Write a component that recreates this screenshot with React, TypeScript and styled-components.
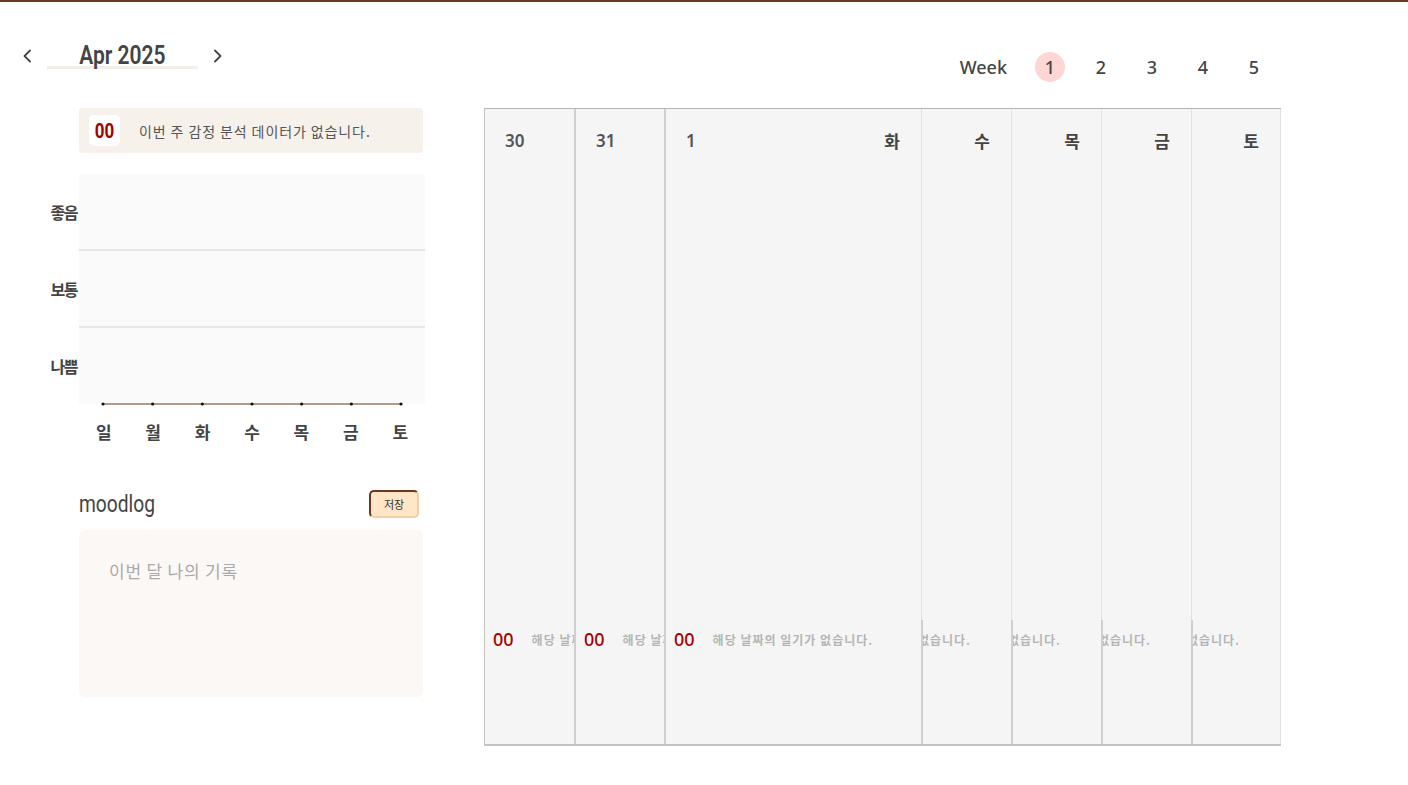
import React from 'react';
import styled, { createGlobalStyle } from 'styled-components';

const GlobalStyle = createGlobalStyle`
  html, body {
    margin: 0;
    padding: 0;
    background: #ffffff;
    font-family: "Noto Sans CJK KR", "Noto Sans", sans-serif;
    color: #444;
  }
  * { box-sizing: border-box; }
`;

const PageContainer = styled.div`
  min-height: 785px;
  border-top: 2px solid #6b3a1e;
  display: flex;
  align-items: flex-start;
  padding: 36px 0 0 20px;
`;

const LeftPanel = styled.div`
  width: 405px;
  display: flex;
  flex-direction: column;
`;

const MonthNav = styled.div`
  display: flex;
  align-items: center;
  height: 36px;
`;

const ArrowButton = styled.button`
  border: none;
  background: none;
  padding: 0;
  width: 14px;
  height: 20px;
  display: flex;
  align-items: center;
  justify-content: center;
  color: #444;
  cursor: pointer;
`;

const MonthTitle = styled.div`
  width: 151px;
  margin: 0 13px;
  height: 26px;
  border-bottom: 3px solid #f3eee9;
  display: flex;
  justify-content: center;
  overflow: visible;
`;

const Condensed = styled.span<{ $size: number; $weight: number }>`
  display: inline-block;
  font-family: Roboto, "Liberation Sans", sans-serif;
  font-weight: ${(p) => p.$weight};
  font-size: ${(p) => p.$size}px;
  line-height: 1;
  color: #444;
  transform: scaleX(0.84);
  white-space: nowrap;
`;

const Indented = styled.div`
  margin-left: 59px;
  width: 346px;
`;

const SummaryBox = styled.div`
  margin-top: 34px;
  width: 344px;
  height: 45px;
  background: #f6f1eb;
  border-radius: 4px;
  display: flex;
  align-items: center;
  padding: 0 10px;
  gap: 19px;
`;

const ScoreBadge = styled.div`
  width: 31px;
  height: 31px;
  background: #fff;
  border-radius: 5px;
  display: flex;
  align-items: center;
  justify-content: center;
  font-family: Roboto, sans-serif;
  font-weight: 700;
  font-size: 20px;
  color: #a30000;
  span { display: inline-block; transform: scaleX(0.85); }
`;

const SummaryText = styled.span`
  font-size: 14px;
  letter-spacing: 0.9px;
  color: #555;
`;

const ChartWrap = styled.div`
  margin-top: 21px;
  position: relative;
`;

const ChartArea = styled.div`
  width: 346px;
  background: #fafafa;
  display: flex;
  flex-direction: column;
  position: relative;
`;

const ChartRow = styled.div<{ $last?: boolean }>`
  height: ${(p) => (p.$last ? 76 : 77)}px;
  border-bottom: ${(p) => (p.$last ? 'none' : '2px solid #ebe6e6')};
  position: relative;
`;

const YLabel = styled.span`
  position: absolute;
  right: calc(100% + 2px);
  top: 50%;
  transform: translateY(-50%);
  white-space: nowrap;
  font-weight: 700;
  font-size: 16px;
  color: #444;
  letter-spacing: -1.5px;
`;

const Baseline = styled.svg`
  position: absolute;
  left: 0;
  bottom: -2px;
`;

const XLabels = styled.div`
  width: 346px;
  display: grid;
  grid-template-columns: repeat(7, 1fr);
  margin-top: 16px;
`;

const XLabel = styled.span`
  text-align: center;
  font-weight: 700;
  font-size: 17px;
  color: #444;
  line-height: 24px;
`;

const MoodHeader = styled.div`
  margin-top: 46px;
  width: 340px;
  display: flex;
  align-items: center;
  justify-content: space-between;
  height: 28px;
`;

const MoodTitle = styled.div`
  width: 90px;
  display: flex;
  span { transform-origin: left center; transform: scaleX(0.8); }
`;

const SaveButton = styled.button`
  width: 50px;
  height: 28px;
  background: #ffe6c7;
  border: 2px solid;
  border-color: #6b3a1e #f2cfa8 #f2cfa8 #6b3a1e;
  border-radius: 5px;
  font-family: "Noto Sans CJK KR", sans-serif;
  font-size: 11px;
  color: #333;
  padding: 0;
`;

const MoodTextarea = styled.textarea`
  margin-top: 12px;
  width: 344px;
  height: 167px;
  background: #fcf8f5;
  border: none;
  border-radius: 6px;
  resize: none;
  padding: 28px 30px;
  font-family: "Noto Sans CJK KR", sans-serif;
  font-size: 17px;
  letter-spacing: 0.8px;
  color: #444;
  outline: none;
  &::placeholder {
    color: #aaa;
  }
`;

const RightPanel = styled.div`
  margin-left: 59px;
  width: 797px;
  display: flex;
  flex-direction: column;
`;

const WeekNav = styled.div`
  height: 30px;
  margin-top: 14px;
  display: flex;
  align-items: center;
  justify-content: flex-end;
  padding-right: 12px;
  gap: 21px;
  font-family: "Noto Sans", "Lato", sans-serif;
  font-weight: 500;
  font-size: 18px;
  color: #444;
`;

const WeekLabel = styled.span`
  margin-right: 7px;
`;

const WeekTab = styled.span<{ $active?: boolean }>`
  width: 30px;
  height: 30px;
  border-radius: 50%;
  background: ${(p) => (p.$active ? '#ffd6d6' : 'transparent')};
  display: flex;
  align-items: center;
  justify-content: center;
`;

const Calendar = styled.div`
  margin-top: 26px;
  height: 638px;
  display: flex;
  border-top: 1px solid #b5b5b5;
  border-bottom: 2px solid #c4c4c4;
  border-left: 1px solid #c4c4c4;
  background: #f5f5f5;
`;

const DayColumn = styled.div<{ $w: number; $strong?: boolean; $last?: boolean }>`
  width: ${(p) => p.$w}px;
  display: flex;
  flex-direction: column;
  border-left: ${(p) => (p.$strong ? '2px solid #cfcfcf' : 'none')};
  border-right: ${(p) => (p.$last ? '1px solid #e2e2e2' : 'none')};
  position: relative;
  &:first-child { border-left: none; width: ${(p) => p.$w - 1}px; }
`;

const DayTop = styled.div<{ $soft?: boolean }>`
  flex: 1;
  display: flex;
  justify-content: space-between;
  padding: 19px 21px 0 20px;
  border-left: ${(p) => (p.$soft ? '1px solid #e2e2e2' : 'none')};
`;

const DateNum = styled.span`
  font-family: "Noto Sans", sans-serif;
  font-weight: 600;
  font-size: 17px;
  line-height: 26px;
  color: #555;
`;

const DayName = styled.span`
  font-weight: 700;
  font-size: 17px;
  line-height: 26px;
  color: #444;
`;

const DayBottom = styled.div<{ $end?: boolean; $soft?: boolean }>`
  height: 124px;
  overflow: hidden;
  display: flex;
  justify-content: ${(p) => (p.$end ? 'flex-end' : 'flex-start')};
  padding: 6px ${(p) => (p.$end ? 40 : 0)}px 0 ${(p) => (p.$end ? 0 : 8)}px;
  border-left: ${(p) => (p.$soft ? '2px solid #cfcfcf' : 'none')};
`;

const DiaryRow = styled.div`
  display: flex;
  align-items: center;
  gap: 18px;
  flex-shrink: 0;
  height: 26px;
  white-space: nowrap;
`;

const DiaryScore = styled.span`
  font-family: "Noto Sans", sans-serif;
  font-weight: 500;
  font-size: 18px;
  color: #a30000;
`;

const DiaryEmpty = styled.span`
  font-weight: 700;
  font-size: 12px;
  letter-spacing: 1px;
  color: #b5b5b5;
`;

const Chevron = ({ dir }: { dir: 'left' | 'right' }) => (
  <svg width="10" height="14" viewBox="0 0 10 14" fill="none">
    <path
      d={dir === 'left' ? 'M8 1.5 L2.5 7 L8 12.5' : 'M2 1.5 L7.5 7 L2 12.5'}
      stroke="#444"
      strokeWidth="1.8"
      strokeLinecap="round"
      strokeLinejoin="round"
    />
  </svg>
);

const weekdays = ['일', '월', '화', '수', '목', '금', '토'];

type Day = { w: number; date?: string; name?: string; end?: boolean; strong?: boolean };

const days: Day[] = [
  { w: 90, date: '30', strong: true },
  { w: 90, date: '31', strong: true },
  { w: 257, date: '1', name: '화', strong: true },
  { w: 90, name: '수', end: true },
  { w: 90, name: '목', end: true },
  { w: 90, name: '금', end: true },
  { w: 90, name: '토', end: true },
];

const App: React.FC = () => {
  const dotXs = weekdays.map((_, i) => 24 + i * 49.67);

  return (
    <>
      <GlobalStyle />
      <PageContainer>
        <LeftPanel>
          <MonthNav>
            <ArrowButton aria-label="prev">
              <Chevron dir="left" />
            </ArrowButton>
            <MonthTitle>
              <Condensed $size={25} $weight={600}>Apr 2025</Condensed>
            </MonthTitle>
            <ArrowButton aria-label="next">
              <Chevron dir="right" />
            </ArrowButton>
          </MonthNav>

          <Indented>
            <SummaryBox>
              <ScoreBadge>
                <span>00</span>
              </ScoreBadge>
              <SummaryText>이번 주 감정 분석 데이터가 없습니다.</SummaryText>
            </SummaryBox>

            <ChartWrap>
              <ChartArea>
                <ChartRow>
                  <YLabel>좋음</YLabel>
                </ChartRow>
                <ChartRow>
                  <YLabel>보통</YLabel>
                </ChartRow>
                <ChartRow $last>
                  <YLabel>나쁨</YLabel>
                </ChartRow>
                <Baseline width="346" height="4" viewBox="0 0 346 4">
                  <line x1={dotXs[0]} y1="2" x2={dotXs[6]} y2="2" stroke="#b09a8c" strokeWidth="2" />
                  {dotXs.map((x) => (
                    <circle key={x} cx={x} cy="2" r="1.6" fill="#111" />
                  ))}
                </Baseline>
              </ChartArea>
              <XLabels>
                {weekdays.map((d) => (
                  <XLabel key={d}>{d}</XLabel>
                ))}
              </XLabels>
            </ChartWrap>

            <MoodHeader>
              <MoodTitle>
                <Condensed $size={24} $weight={400}>moodlog</Condensed>
              </MoodTitle>
              <SaveButton>저장</SaveButton>
            </MoodHeader>
            <MoodTextarea placeholder="이번 달 나의 기록" />
          </Indented>
        </LeftPanel>

        <RightPanel>
          <WeekNav>
            <WeekLabel>Week</WeekLabel>
            {[1, 2, 3, 4, 5].map((n) => (
              <WeekTab key={n} $active={n === 1}>
                {n}
              </WeekTab>
            ))}
          </WeekNav>

          <Calendar>
            {days.map((d, i) => (
              <DayColumn key={i} $w={d.w} $strong={d.strong} $last={i === days.length - 1}>
                <DayTop $soft={!d.strong}>
                  <DateNum>{d.date ?? ''}</DateNum>
                  <DayName>{d.name ?? ''}</DayName>
                </DayTop>
                <DayBottom $end={d.end} $soft={!d.strong}>
                  <DiaryRow>
                    <DiaryScore>00</DiaryScore>
                    <DiaryEmpty>해당 날짜의 일기가 없습니다.</DiaryEmpty>
                  </DiaryRow>
                </DayBottom>
              </DayColumn>
            ))}
          </Calendar>
        </RightPanel>
      </PageContainer>
    </>
  );
};

export default App;
